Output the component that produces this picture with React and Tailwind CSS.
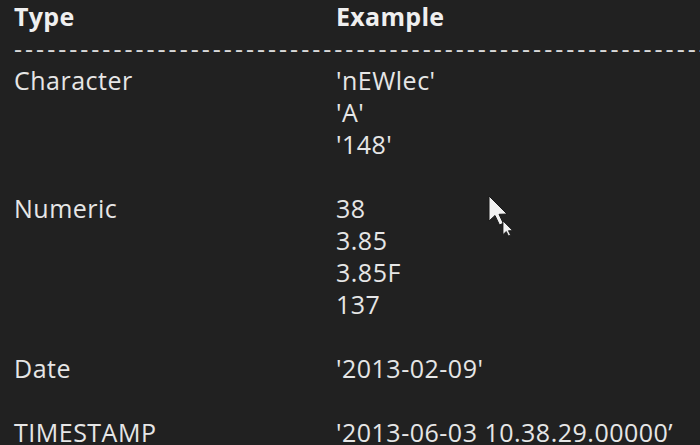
import React from "react";

const rows = [
  { type: "Character", examples: ["'nEWlec'", "'A'", "'148'"] },
  { type: "Numeric", examples: ["38", "3.85", "3.85F", "137"] },
  { type: "Date", examples: ["'2013-02-09'"] },
  { type: "TIMESTAMP", examples: ["'2013-06-03 10.38.29.00000\u2019"] },
];

function Cursor() {
  return (
    <svg className="absolute left-[486px] top-[194px]" width="34" height="48" viewBox="0 0 34 48">
      <path d="M3 2 L3 27 L9 21.5 L13.5 31 L17.3 29.3 L13 20.3 L21 20 Z" fill="#f2f2f2" stroke="#1a1a1a" strokeWidth="1" />
      <path d="M17 27 L17 40.5 L20.3 37.5 L22.5 42 L24.5 41 L22.4 36.7 L26.5 36.5 Z" fill="#f2f2f2" stroke="#1a1a1a" strokeWidth="0.8" />
    </svg>
  );
}

export default function App() {
  return (
    <div className="relative w-[700px] h-[445px] overflow-hidden bg-[#212121] text-[#e6e6e6] text-[25px] leading-[32px] tracking-[0.5px] pl-[14px]" style={{ fontFamily: "'Open Sans', 'Noto Sans', sans-serif" }}>
      {/* header */}
      <div className="flex font-bold text-[#efefef] tracking-[0.3px]">
        <div className="w-[322px]">Type</div>
        <div>Example</div>
      </div>
      <div className="whitespace-nowrap overflow-hidden tracking-[3px] text-[#d8d8d8]">
        {"-".repeat(70)}
      </div>

      {rows.map((r) => (
        <div key={r.type} className="flex mb-[32px]">
          <div className="w-[322px] shrink-0">{r.type}</div>
          <div className="flex flex-col whitespace-nowrap">
            {r.examples.map((e) => (
              <div key={e}>{e}</div>
            ))}
          </div>
        </div>
      ))}

      <Cursor />
    </div>
  );
}
